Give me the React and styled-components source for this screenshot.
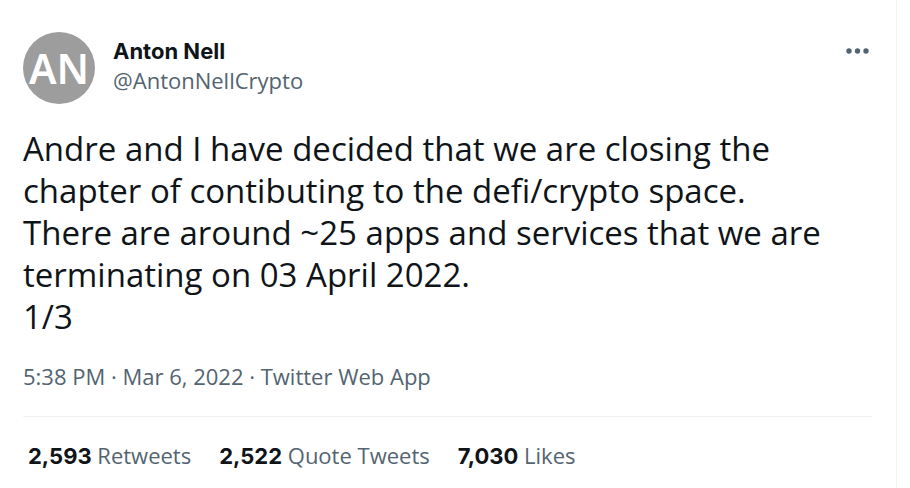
import React from "react";
import styled, { createGlobalStyle } from "styled-components";

const Global = createGlobalStyle`
  * { box-sizing: border-box; }
  body { margin: 0; background: #fff; color: #0f1419; font-family: "Open Sans", sans-serif; }
`;
const Column = styled.main`
  min-height: 100vh;
  margin-right: 13px;
  padding: 32px 24px 16px 23px;
  border-right: 1px solid #eff3f4;
`;
const Header = styled.header`
  display: flex;
  gap: 18px;
`;
const Avatar = styled.a`
  display: flex;
  align-items: center;
  justify-content: center;
  width: 72px;
  height: 72px;
  border-radius: 50%;
  overflow: hidden;
  background: #9d9d9d;
  color: #fff;
  font: 600 41px/1 "Noto Sans", sans-serif;
  text-decoration: none;
`;
const Author = styled.div`
  display: flex;
  flex: 1;
  flex-direction: column;
  align-items: flex-start;
  padding-top: 4px;
`;
const Name = styled.a`
  color: #0f1419;
  font-family: Inter, sans-serif;
  font-size: 22px;
  font-weight: 700;
  line-height: 30px;
  text-decoration: none;
`;
const Handle = styled.a`
  color: #536471;
  font-size: 22px;
  line-height: 28px;
  text-decoration: none;
`;
const More = styled.button`
  display: flex;
  align-self: flex-start;
  margin-top: 5px;
  padding: 0;
  border: 0;
  background: none;
  color: #536471;
  cursor: pointer;
`;
const Body = styled.p`
  margin: 24px 0 0;
  font-size: 33px;
  line-height: 42px;
  white-space: pre-line;
`;
const Meta = styled.div`
  padding: 24px 0 26px;
  border-bottom: 1px solid #eff3f4;
  color: #536471;
  font-size: 22px;
  line-height: 28px;
`;
const Stats = styled.nav`
  display: flex;
  gap: 28px;
  padding: 24px 5px;
`;
const Stat = styled.a`
  color: #536471;
  font-size: 22px;
  line-height: 28px;
  text-decoration: none;
`;
const Count = styled.strong`
  color: #0f1419;
  font-family: Inter, sans-serif;
  font-weight: 700;
`;

const stats = [["2,593", "Retweets"], ["2,522", "Quote Tweets"], ["7,030", "Likes"]];
const text = `Andre and I have decided that we are closing the
chapter of contibuting to the defi/crypto space.
There are around ~25 apps and services that we are
terminating on 03 April 2022.
1/3`;

export default function App() {
  return (
    <>
      <Global />
      <Column>
        <article>
          <Header>
            <Avatar href="#profile">AN</Avatar>
            <Author>
              <Name href="#profile">Anton Nell</Name>
              <Handle href="#profile">@AntonNellCrypto</Handle>
            </Author>
            <More aria-label="More">
              <svg width="28" height="28" viewBox="0 0 28 28" fill="currentColor">
                <circle cx="5" cy="14" r="2.7" />
                <circle cx="13.5" cy="14" r="2.7" />
                <circle cx="22" cy="14" r="2.7" />
              </svg>
            </More>
          </Header>
          <Body>{text}</Body>
          <Meta><time dateTime="2022-03-06T17:38">5:38 PM · Mar 6, 2022</time> · Twitter Web App</Meta>
          <Stats>
            {stats.map(([count, label]) => (
              <Stat key={label} href="#stats"><Count>{count}</Count> {label}</Stat>
            ))}
          </Stats>
        </article>
      </Column>
    </>
  );
}
